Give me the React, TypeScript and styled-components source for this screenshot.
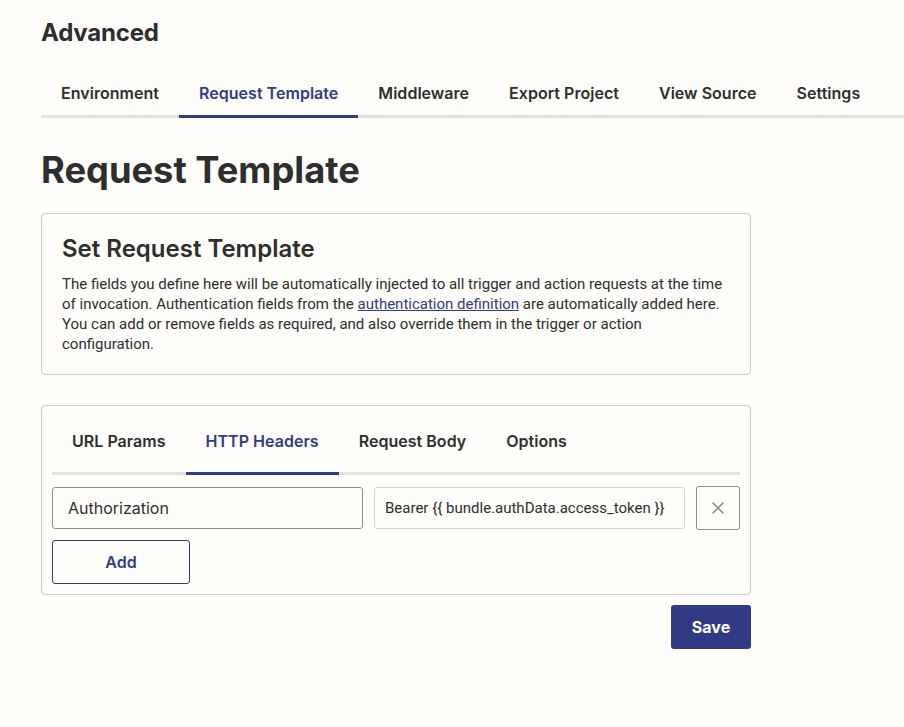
import React from "react";
import styled, { createGlobalStyle } from "styled-components";

const navy = "#313b84";
const ink = "#2d2e2e";

const GlobalStyle = createGlobalStyle`
  * {
    box-sizing: border-box;
  }
  body {
    margin: 0;
    background: #fffdf9;
    font-family: Inter, "Noto Sans", sans-serif;
    color: ${ink};
  }
`;

const Page = styled.div`
  padding: 18px 0 40px 41px;
`;

const PageTitle = styled.h2`
  margin: 0;
  font-size: 24px;
  font-weight: 700;
  line-height: 30px;
  letter-spacing: -0.2px;
`;

const NavBar = styled.nav`
  display: flex;
  margin-top: 35px;
  border-bottom: 3px solid #e3e2de;
`;

const NavTab = styled.div<{ active?: boolean }>`
  padding: 0 20px 12px;
  font-size: 16px;
  font-weight: 600;
  line-height: 20px;
  letter-spacing: 0.03px;
  color: ${(p) => (p.active ? navy : ink)};
  margin-bottom: -3px;
  border-bottom: 3px solid ${(p) => (p.active ? navy : "transparent")};
  white-space: nowrap;
`;

const Content = styled.div`
  width: 710px;
`;

const Heading = styled.h1`
  margin: 29px 0 0;
  font-size: 36.3px;
  font-weight: 700;
  line-height: 46px;
`;

const Card = styled.section<{ pad?: string }>`
  margin-top: ${(p) => (p.pad === "tabs" ? "30px" : "20px")};
  border: 1px solid #cbcac6;
  border-radius: 4px;
  padding: ${(p) => (p.pad === "tabs" ? "5px 10px 10px" : "20px 20px 20px")};
`;

const CardTitle = styled.h3`
  margin: 0;
  font-size: 24px;
  font-weight: 600;
  line-height: 30px;
`;

const Body = styled.p`
  margin: 10px 0 0;
  font-family: Roboto, "Liberation Sans", sans-serif;
  font-size: 15px;
  line-height: 20px;
  color: ${ink};
`;

const Link = styled.a`
  color: ${navy};
  text-decoration: underline;
`;

const SubTabs = styled.div`
  display: flex;
  padding-top: 10px;
  border-bottom: 3px solid #e3e2de;
`;

const SubTab = styled(NavTab)`
  padding: 10px 20px 21px;
`;

const Row = styled.div`
  display: flex;
  gap: 11px;
  margin-top: 12px;
`;

const Field = styled.div<{ strong?: boolean }>`
  flex: 1 1 300px;
  min-width: 0;
  height: 42px;
  display: flex;
  align-items: center;
  border: 1px solid ${(p) => (p.strong ? "#8f8e8a" : "#d6d5d1")};
  border-radius: 3px;
  background: #fffdf9;
  font-family: ${(p) => (p.strong ? "Inter, sans-serif" : "Roboto, sans-serif")};
  font-size: ${(p) => (p.strong ? "16px" : "15px")};
  padding: 0 ${(p) => (p.strong ? "15px" : "10px")};
  color: ${ink};
  white-space: nowrap;
  overflow: hidden;
`;

const IconButton = styled.button`
  width: 44px;
  height: 44px;
  margin-top: -1px;
  flex: none;
  display: flex;
  align-items: center;
  justify-content: center;
  border: 1px solid #8f8e8a;
  border-radius: 3px;
  background: transparent;
  color: #8f8e8a;
  padding: 0;
`;

const OutlineButton = styled.button`
  margin-top: 10px;
  width: 138px;
  height: 44px;
  border: 1px solid ${navy};
  border-radius: 3px;
  background: transparent;
  color: ${navy};
  font-family: Inter, sans-serif;
  font-size: 16px;
  font-weight: 600;
`;

const Footer = styled.div`
  display: flex;
  justify-content: flex-end;
  margin-top: 10px;
`;

const PrimaryButton = styled.button`
  width: 80px;
  height: 44px;
  border: none;
  border-radius: 3px;
  background: ${navy};
  color: #fff;
  font-family: Inter, sans-serif;
  font-size: 16px;
  font-weight: 700;
`;

const navTabs = ["Environment", "Request Template", "Middleware", "Export Project", "View Source", "Settings"];
const subTabs = ["URL Params", "HTTP Headers", "Request Body", "Options"];

export default function App() {
  return (
    <>
      <GlobalStyle />
      <Page>
        <PageTitle>Advanced</PageTitle>
        <NavBar>
          {navTabs.map((t) => (
            <NavTab key={t} active={t === "Request Template"}>
              {t}
            </NavTab>
          ))}
        </NavBar>
        <Content>
          <Heading>Request Template</Heading>
          <Card>
            <CardTitle>Set Request Template</CardTitle>
            <Body>
              The fields you define here will be automatically injected to all trigger and action requests at the time
              of invocation. Authentication fields from the <Link href="#">authentication definition</Link> are
              automatically added here. You can add or remove fields as required, and also override them in the trigger
              or action configuration.
            </Body>
          </Card>
          <Card pad="tabs">
            <SubTabs>
              {subTabs.map((t) => (
                <SubTab key={t} active={t === "HTTP Headers"}>
                  {t}
                </SubTab>
              ))}
            </SubTabs>
            <Row>
              <Field strong>Authorization</Field>
              <Field>Bearer {"{{ bundle.authData.access_token }}"}</Field>
              <IconButton aria-label="Remove">
                <svg width="14" height="14" viewBox="0 0 14 14" fill="none" stroke="currentColor" strokeWidth="1.6">
                  <path d="M1.5 1.5l11 11M12.5 1.5l-11 11" />
                </svg>
              </IconButton>
            </Row>
            <OutlineButton>Add</OutlineButton>
          </Card>
          <Footer>
            <PrimaryButton>Save</PrimaryButton>
          </Footer>
        </Content>
      </Page>
    </>
  );
}
